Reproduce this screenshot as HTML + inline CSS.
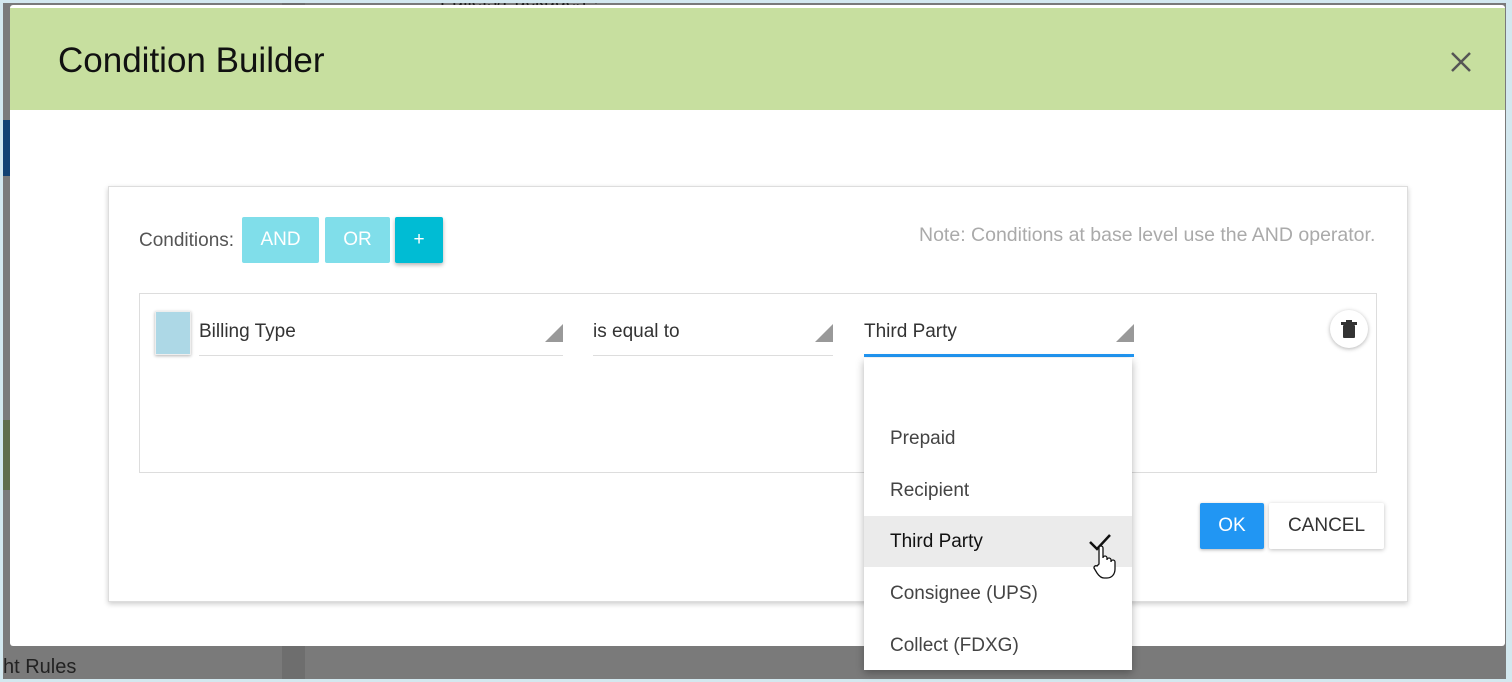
<!DOCTYPE html>
<html><head><style>
*{margin:0;padding:0;box-sizing:border-box}
body{width:1512px;height:682px;overflow:hidden;background:#d3e8ef;font-family:"Liberation Sans",sans-serif;position:relative}
.bg{position:absolute;left:3px;top:3px;width:1503px;height:676px;background:#7a7a7a;overflow:hidden}
.abs{position:absolute}
.modal{position:absolute;left:10px;top:5px;width:1495px;height:641px;background:#fff;border-radius:3px;overflow:hidden}
.hdr{position:absolute;left:0;top:3px;width:100%;height:102px;background:#c7df9f}
.hdr h1{position:absolute;left:48px;top:33px;font-size:35px;font-weight:normal;color:#111}
.card{position:absolute;left:98px;top:181px;width:1300px;height:416px;background:#fff;border:1px solid #ddd;box-shadow:0 2px 5px rgba(0,0,0,.2)}
.btn{position:absolute;height:46px;color:#fff;font-size:19px;text-align:center;line-height:46px;border-radius:2px}
.sel{position:absolute;border-bottom:1px solid #ddd;font-size:19px;color:#333;height:45px;line-height:42px}
.tri{position:absolute;right:0;top:13px;width:0;height:0;border-left:18px solid transparent;border-bottom:18px solid #999}
.dd{position:absolute;left:864px;top:358px;width:268px;height:312px;background:#fff;box-shadow:0 3px 8px rgba(0,0,0,.3)}
.dd div{position:absolute;left:26px;font-size:19px;color:#444}
</style></head><body>
<div class="bg">
<div class="abs" style="left:0;top:117px;width:10px;height:56px;background:#134273"></div>
<div class="abs" style="left:0;top:417px;width:10px;height:70px;background:#606e4c"></div>
<div class="abs" style="left:279px;top:0;width:23px;height:676px;background:#6e6e6e"></div>
<div class="abs" style="left:0;top:653px;font-size:20px;color:#222">ht Rules</div>
<div class="abs" style="left:437px;top:-12px;font-size:19px;color:#222">Pallets/Packages ?</div>
</div>
<div class="modal">
<div class="hdr"><h1>Condition Builder</h1>
<svg class="abs" style="left:1440px;top:43px" width="22" height="22"><path d="M2 2L20 20M20 2L2 20" stroke="#555" stroke-width="2.5"/></svg></div>
</div>
<div class="card" style="left:108px;top:186px">
<div class="abs" style="left:30px;top:43px;font-size:19px;color:#555">Conditions:</div>
<div class="btn" style="left:133px;top:30px;width:77px;background:#80deea">AND</div>
<div class="btn" style="left:216px;top:30px;width:65px;background:#80deea">OR</div>
<div class="btn" style="left:286px;top:30px;width:48px;background:#00bcd4;box-shadow:0 2px 4px rgba(0,0,0,.3)">+</div>
<div class="abs" style="left:810px;top:37px;font-size:19.5px;color:#aaa">Note: Conditions at base level use the AND operator.</div>
<div class="abs" style="left:30px;top:106px;width:1238px;height:180px;border:1px solid #ddd">
<div class="abs" style="left:15px;top:17px;width:36px;height:44px;background:#add8e6;border:1px solid #eee;box-shadow:0 1px 3px rgba(0,0,0,.3)"></div>
<div class="sel" style="left:59px;top:17px;width:364px">Billing Type<span class="tri"></span></div>
<div class="sel" style="left:453px;top:17px;width:240px">is equal to<span class="tri"></span></div>
<div class="sel" style="left:724px;top:17px;width:270px;border-bottom:3px solid #2196f3;height:46px">Third Party<span class="tri"></span></div>
<div class="abs" style="left:1190px;top:16px;width:38px;height:38px;border-radius:50%;background:#fff;box-shadow:0 1px 4px rgba(0,0,0,.3)">
<svg class="abs" style="left:11px;top:10px" width="16" height="18"><rect x="0" y="2" width="16" height="3" fill="#333"/><rect x="5" y="0" width="6" height="3" fill="#333"/><rect x="2" y="5" width="12" height="13" rx="1" fill="#333"/></svg></div>
</div>
<div class="btn" style="left:1091px;top:316px;width:64px;background:#2196f3;box-shadow:0 1px 3px rgba(0,0,0,.3)">OK</div>
<div class="btn" style="left:1160px;top:316px;width:115px;background:#fff;color:#333;box-shadow:0 1px 4px rgba(0,0,0,.25)">CANCEL</div>
</div>
<div class="dd">
<div style="top:70px">Prepaid</div>
<div style="top:122px">Recipient</div>
<div style="left:0;top:158px;width:268px;height:51px;background:#ebebeb"></div>
<div style="top:173px;color:#111">Third Party</div>
<svg class="abs" style="left:224px;top:174px" width="24" height="20"><path d="M2 10L9 17L22 3" stroke="#111" stroke-width="2.5" fill="none"/></svg>
<div style="top:225px">Consignee (UPS)</div>
<div style="top:277px">Collect (FDXG)</div>
<svg class="abs" style="left:228px;top:186px" width="26" height="36"><path d="M7 20V4a2 2 0 0 1 4 0v10a2 2 0 0 1 4 0v2a2 2 0 0 1 4 0v2a2 2 0 0 1 4 0v7c0 5-3 9-8 9h-3c-3 0-5-2-7-5l-3-5a2 2 0 0 1 3-2z" fill="#fff" stroke="#111" stroke-width="1.3"/></svg>
</div>
</body></html>
